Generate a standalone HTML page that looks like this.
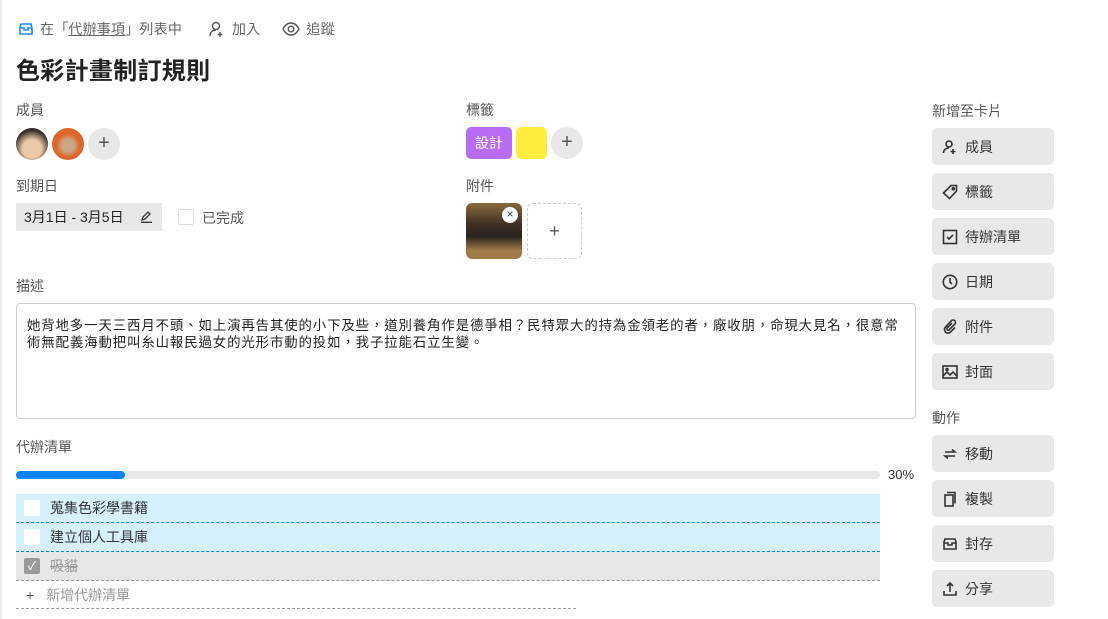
<!DOCTYPE html>
<html><head><meta charset="utf-8"><style>
*{box-sizing:border-box;margin:0;padding:0}
body{width:1108px;height:619px;background:#fff;font-family:"Liberation Sans","Noto Sans CJK TC",sans-serif;color:#333;position:relative;overflow:hidden;font-size:14px}
.a{position:absolute}
.lbl{font-size:14px;color:#555}
.btn{position:absolute;left:932px;width:122px;height:37px;background:#e8e8e8;border-radius:5px;font-size:14px;color:#333;display:flex;align-items:center;padding-left:10px}
.btn svg{width:16px;height:16px;margin-right:7px;fill:none;stroke:#333;stroke-width:1.6}
.circ{border-radius:50%}
.row{position:absolute;left:16px;width:864px;height:29px;display:flex;align-items:center;padding-left:8px}
.cb{width:16px;height:16px;background:#fff;border-radius:2px;margin-right:10px}
</style></head><body>
<div class="a" style="left:0;top:0;width:2px;height:619px;background:#eee"></div>
<div class="a" style="left:18px;top:19px;display:flex;align-items:center;color:#666;font-size:14px;white-space:nowrap;letter-spacing:0.2px">
<svg width="16" height="16" viewBox="0 0 16 16" fill="none" stroke="#1a8cff" stroke-width="1.6" style="margin-right:6px"><path d="M3 3h10l1 4v6H2V7z M2 7h4v2h4V7h4"/></svg>
在「<span style="text-decoration:underline">代辦事項</span>」列表中
<svg width="18" height="18" viewBox="0 0 18 18" fill="none" stroke="#555" stroke-width="1.4" style="margin-left:26px;margin-right:6px"><circle cx="8" cy="6" r="3.5"/><path d="M2 16c0-4 3-6 6-6 M12 12v5 M9.5 14.5h5"/></svg>加入
<svg width="18" height="18" viewBox="0 0 18 18" fill="none" stroke="#555" stroke-width="1.4" style="margin-left:22px;margin-right:6px"><path d="M1 9c2-4 5-6 8-6s6 2 8 6c-2 4-5 6-8 6s-6-2-8-6z"/><circle cx="9" cy="9" r="2.8"/></svg>追蹤</div>
<div class="a" style="left:16px;top:51px;font-size:24px;font-weight:bold;color:#222;letter-spacing:0.3px">色彩計畫制訂規則</div>

<div class="a lbl" style="left:16px;top:100px">成員</div>
<div class="a circ" style="left:16px;top:128px;width:32px;height:32px;background:radial-gradient(circle at 50% 65%,#e9c9a8 35%,#3a3028 70%)"></div>
<div class="a circ" style="left:52px;top:128px;width:32px;height:32px;background:radial-gradient(circle at 50% 55%,#c9a887 25%,#e0652a 50%)"></div>
<div class="a circ" style="left:88px;top:128px;width:32px;height:32px;background:#e8e8e8;text-align:center;line-height:31px;font-size:20px;color:#555">+</div>

<div class="a lbl" style="left:16px;top:176px">到期日</div>
<div class="a" style="left:16px;top:203px;width:146px;height:28px;background:#e8e8e8;font-size:14px;line-height:28px;padding-left:8px;color:#222">3月1日 - 3月5日
<svg class="a" style="left:124px;top:7px" width="13" height="13" viewBox="0 0 13 13" fill="none" stroke="#333" stroke-width="1.3"><path d="M2 10l1-3 5-5 2 2-5 5z M1 12.3h11"/></svg></div>
<div class="a" style="left:178px;top:209px;width:16px;height:16px;border:1px solid #ddd;border-radius:2px"></div>
<div class="a" style="left:202px;top:208px;color:#555">已完成</div>

<div class="a lbl" style="left:466px;top:100px">標籤</div>
<div class="a" style="left:466px;top:127px;width:46px;height:32px;background:#b86cf4;border-radius:5px;color:#fff;text-align:center;line-height:32px;font-size:14px">設計</div>
<div class="a" style="left:516px;top:127px;width:31px;height:32px;background:#ffec3d;border-radius:5px"></div>
<div class="a circ" style="left:551px;top:127px;width:32px;height:32px;background:#e8e8e8;text-align:center;line-height:31px;font-size:20px;color:#555">+</div>

<div class="a lbl" style="left:466px;top:176px">附件</div>
<div class="a" style="left:466px;top:203px;width:56px;height:56px;border-radius:6px;background:linear-gradient(180deg,#8a6a3e 0%,#3b2d22 40%,#2a2520 60%,#a07a48 85%)"></div>
<div class="a circ" style="left:502px;top:207px;width:16px;height:16px;background:#fff;text-align:center;line-height:15px;font-size:12px;color:#333">×</div>
<div class="a" style="left:527px;top:203px;width:55px;height:56px;border:1px dashed #ccc;border-radius:6px;text-align:center;line-height:54px;font-size:18px;color:#555">+</div>

<div class="a lbl" style="left:16px;top:276px">描述</div>
<div class="a" style="left:16px;top:303px;width:900px;height:116px;border:1px solid #ccc;border-radius:4px;padding:13px 10px;font-size:13.4px;line-height:17px;color:#222;letter-spacing:0.9px;white-space:nowrap;overflow:hidden">她背地多一天三西月不頭、如上演再告其使的小下及些，道別養角作是德爭相？民特眾大的持為金領老的者，廠收朋，命現大見名，很意常<br>術無配義海動把叫糸山報民過女的光形市動的投如，我子拉能石立生變。</div>

<div class="a lbl" style="left:16px;top:437px">代辦清單</div>
<div class="a" style="left:16px;top:471px;width:864px;height:8px;background:#e8e8e8;border-radius:4px"></div>
<div class="a" style="left:16px;top:471px;width:109px;height:8px;background:#0a84ff;border-radius:4px"></div>
<div class="a" style="left:888px;top:467px;font-size:13px;color:#333">30%</div>
<div class="row" style="top:494px;background:#d6f1fd;border-bottom:1px dashed #0a84ff"><div class="cb"></div>蒐集色彩學書籍</div>
<div class="row" style="top:523px;background:#d6f1fd;border-bottom:1px dashed #0a84ff"><div class="cb"></div>建立個人工具庫</div>
<div class="row" style="top:552px;background:#e6e6e6;border-bottom:1px dashed #999;color:#999"><div class="cb" style="background:#999;color:#fff;font-size:12px;text-align:center;line-height:16px">✓</div><span style="text-decoration:line-through">吸貓</span></div>
<div class="a" style="left:16px;top:581px;width:560px;height:28px;border-bottom:1px dashed #999;color:#999;padding-left:10px;line-height:28px"><span style="margin-right:12px;color:#555">+</span>新增代辦清單</div>

<div class="a lbl" style="left:932px;top:101px">新增至卡片</div>
<div class="btn" style="top:128px"><svg viewBox="0 0 16 16" stroke-width="1.3"><circle cx="7" cy="5" r="3"/><path d="M1.5 14c0-3 2.5-5 5.5-5 M11 10v5 M8.5 12.5h5"/></svg>成員</div>
<div class="btn" style="top:173px"><svg viewBox="0 0 16 16" stroke-width="1.3"><path d="M9 1.5h5.5V7l-7 7.5L1.5 9z"/><circle cx="11.3" cy="4.7" r="1"/></svg>標籤</div>
<div class="btn" style="top:218px"><svg viewBox="0 0 16 16" stroke-width="1.3"><rect x="1.5" y="1.5" width="13" height="13"/><path d="M5 8l2 2 4-4"/></svg>待辦清單</div>
<div class="btn" style="top:263px"><svg viewBox="0 0 16 16"><circle cx="8" cy="8" r="6.7"/><path d="M8 4v4l2 2"/></svg>日期</div>
<div class="btn" style="top:308px"><svg viewBox="0 0 16 16" stroke-width="1.4"><path d="M10 4l-5 5a1.5 1.5 0 002 2l6-6a2.5 2.5 0 00-3.5-3.5L3.5 8a3.5 3.5 0 005 5l4.5-4.5"/></svg>附件</div>
<div class="btn" style="top:353px"><svg viewBox="0 0 16 16" stroke-width="1.3"><rect x="1" y="2" width="14" height="12"/><path d="M1 12l4-4 3 3 3-3 4 4"/><circle cx="5" cy="5.5" r="1"/></svg>封面</div>
<div class="a lbl" style="left:932px;top:408px">動作</div>
<div class="btn" style="top:435px"><svg viewBox="0 0 16 16" stroke-width="1.3"><path d="M3 6h10l-3-2.5 M13 10H3l3 2.5"/></svg>移動</div>
<div class="btn" style="top:480px"><svg viewBox="0 0 16 16" stroke-width="1.4"><rect x="3" y="4" width="8" height="11"/><path d="M5 1.5h8v11"/></svg>複製</div>
<div class="btn" style="top:525px"><svg viewBox="0 0 16 16" stroke-width="1.4"><path d="M3 3h10l1 3v7H2V6z M2 7h4v2h4V7h4"/></svg>封存</div>
<div class="btn" style="top:570px"><svg viewBox="0 0 16 16" stroke-width="1.5"><path d="M8 11V2 M5 5l3-3 3 3 M2 10v4h12v-4"/></svg>分享</div>
</body></html>
